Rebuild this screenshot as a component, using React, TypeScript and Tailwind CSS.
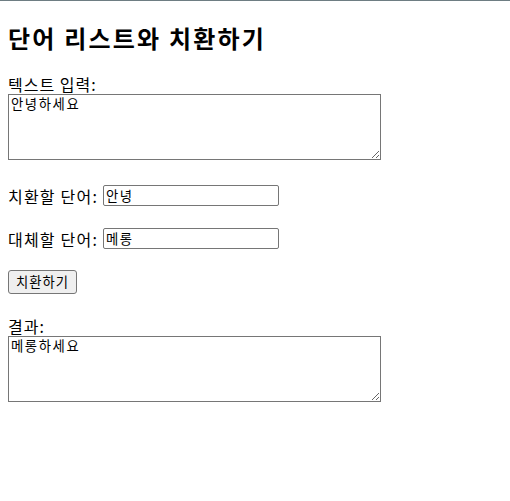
import React, { useState } from "react";

export default function App() {
  const [text, setText] = useState("안녕하세요");
  const [from, setFrom] = useState("안녕");
  const [to, setTo] = useState("메롱");
  const [result, setResult] = useState("메롱하세요");

  const font = { fontFamily: '"Noto Sans CJK KR", "Noto Sans", sans-serif' };

  return (
    <div
      className="min-h-[501px] w-full border-t border-[#6e7d83] bg-white text-black"
      style={font}
    >
      <div className="flex flex-col items-start px-2">
        <h1 className="mt-[21px] h-[32px] text-[24px] font-bold leading-[32px] tracking-[2.2px]">
          단어 리스트와 치환하기
        </h1>
        <label className="mt-[20px] block h-[20px] text-[16px] leading-[20px] tracking-[1px]">
          텍스트 입력:
        </label>
        <textarea
          value={text}
          onChange={(e) => setText(e.target.value)}
          className="block h-[66px] w-[373px] resize border border-[#767676] px-[2px] py-[1px] text-[13.33px] leading-[16px] tracking-[1.6px]"
          style={font}
        />
        <div className="mt-[25px] flex h-[21px] items-center text-[16px] leading-[20px]">
          <span className="tracking-[1.2px]">치환할 단어:</span>
          <input
            value={from}
            onChange={(e) => setFrom(e.target.value)}
            className="ml-[5px] h-[21px] w-[176px] rounded-[2px] border border-[#767676] px-[2px] text-[13.33px] leading-[16px] tracking-[1.4px]"
            style={font}
          />
        </div>
        <div className="mt-[22px] flex h-[21px] items-center text-[16px] leading-[20px]">
          <span className="tracking-[1.2px]">대체할 단어:</span>
          <input
            value={to}
            onChange={(e) => setTo(e.target.value)}
            className="ml-[5px] h-[21px] w-[176px] rounded-[2px] border border-[#767676] px-[2px] text-[13.33px] leading-[16px] tracking-[1.4px]"
            style={font}
          />
        </div>
        <button
          onClick={() => setResult(text.split(from).join(to))}
          className="mt-[21px] h-[24px] w-[69px] rounded-[3px] border border-[#767676] bg-[#efefef] text-[13.33px] leading-[16px] tracking-[1px]"
          style={font}
        >
          치환하기
        </button>
        <label className="mt-[22px] block h-[20px] text-[16px] leading-[20px] tracking-[1px]">
          결과:
        </label>
        <textarea
          value={result}
          readOnly
          className="block h-[66px] w-[373px] resize border border-[#767676] px-[2px] py-[1px] text-[13.33px] leading-[16px] tracking-[1.6px]"
          style={font}
        />
      </div>
    </div>
  );
}
